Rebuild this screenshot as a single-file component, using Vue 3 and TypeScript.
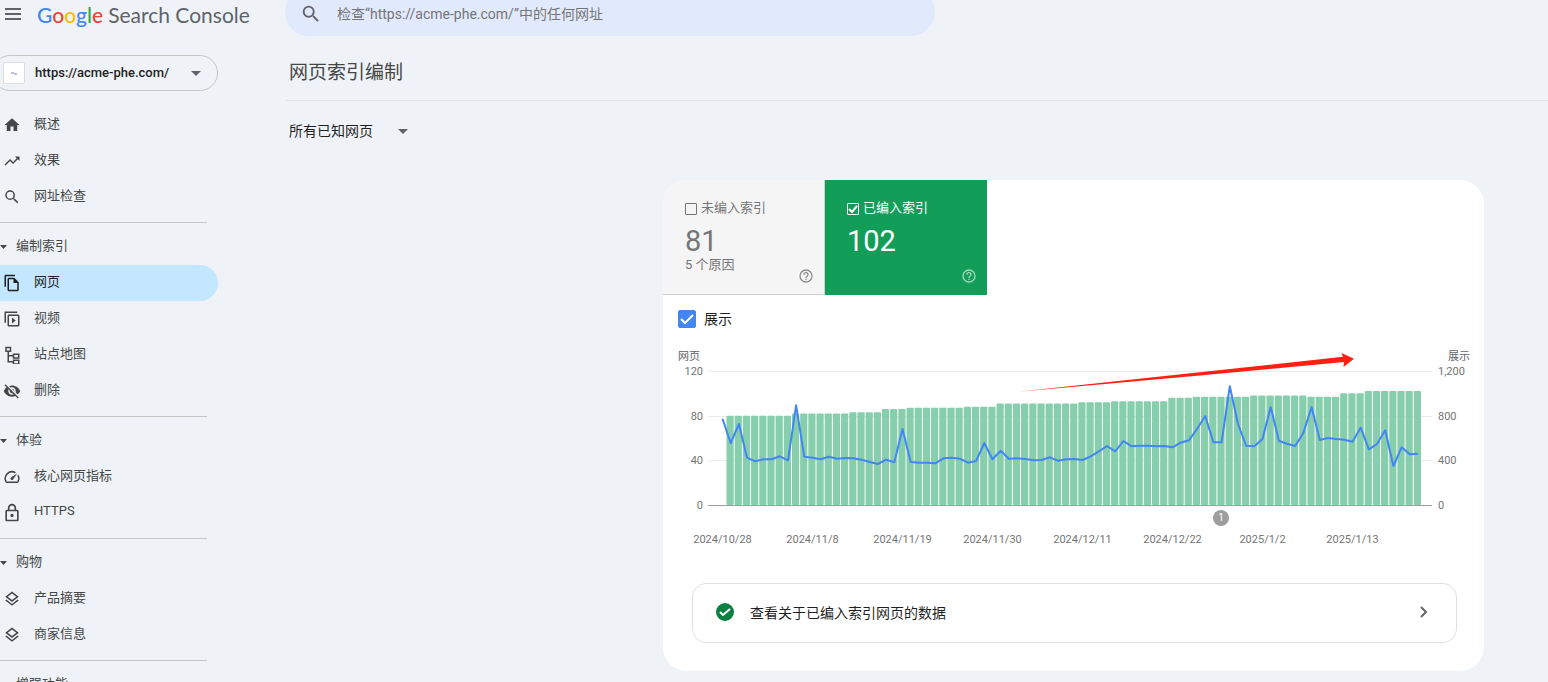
<script setup lang="ts">
import { ref } from 'vue'

interface NavItem {
  label: string
  icon: string
  size: number
  active?: boolean
}
interface NavSection {
  title: string
  items: NavItem[]
}

const icons: Record<string, string> = {
  home: 'M10 20v-6h4v6h5v-8h3L12 3 2 12h3v8z',
  trend: 'M16 6l2.29 2.29-4.88 4.88-4-4L2 16.59 3.41 18l6-6 4 4 6.3-6.29L22 12V6z',
  search:
    'M15.5 14h-.79l-.28-.27A6.47 6.47 0 0 0 16 9.5 6.5 6.5 0 1 0 9.5 16c1.61 0 3.09-.59 4.23-1.57l.27.28v.79l5 4.99L20.49 19zm-6 0a4.5 4.5 0 1 1 0-9 4.5 4.5 0 0 1 0 9z',
  pages:
    'M16 1H4c-1.1 0-2 .9-2 2v14h2V3h12zM15 5l6 6v10c0 1.1-.9 2-2 2H8c-1.1 0-2-.9-2-2V7c0-1.1.9-2 2-2zM8 7v14h11v-9h-5V7z',
  video:
    'M2 2h17v2H4v13H2zM8 6h12c1.1 0 2 .9 2 2v12c0 1.1-.9 2-2 2H8c-1.1 0-2-.9-2-2V8c0-1.1.9-2 2-2zM8 8v12h12V8zM12 10l5 4-5 4z',
  sitemap:
    'M3 1h8v7H8v4h5v-2h9v7h-9v-3H8v6h5v-2h9v7h-9v-3H6V8H3zM5 3v3h4V3zM15 12v3h5v-3zM15 20v3h5v-3z',
  hidden:
    'M12 7c2.76 0 5 2.24 5 5 0 .65-.13 1.26-.36 1.83l2.92 2.92c1.51-1.26 2.7-2.89 3.43-4.75-1.73-4.39-6-7.5-11-7.5-1.4 0-2.74.25-3.98.7l2.16 2.16C10.74 7.13 11.35 7 12 7zM2 4.27l2.28 2.28.46.46C3.08 8.3 1.78 10.02 1 12c1.73 4.39 6 7.5 11 7.5 1.55 0 3.03-.3 4.38-.84l.42.42L19.73 22 21 20.73 3.27 3zM7.53 9.8l1.55 1.55c-.05.21-.08.43-.08.65 0 1.66 1.34 3 3 3 .22 0 .44-.03.65-.08l1.55 1.55c-.67.33-1.41.53-2.2.53-2.76 0-5-2.24-5-5 0-.79.2-1.53.53-2.2zm4.31-.78l3.15 3.15.02-.16c0-1.66-1.34-3-3-3z',
  speed:
    'M20.38 8.57l-1.23 1.85a8 8 0 0 1-.22 7.58H5.07A8 8 0 0 1 15.58 6.85l1.85-1.23A10 10 0 0 0 3.35 19a2 2 0 0 0 1.72 1h13.85a2 2 0 0 0 1.74-1 10 10 0 0 0-.27-10.44zm-9.79 6.84a2 2 0 0 0 2.83 0l5.66-8.49-8.49 5.66a2 2 0 0 0 0 2.83z',
  lock:
    'M18 8h-1V6c0-2.76-2.24-5-5-5S7 3.24 7 6v2H6c-1.1 0-2 .9-2 2v10c0 1.1.9 2 2 2h12c1.1 0 2-.9 2-2V10c0-1.1-.9-2-2-2zM9 6c0-1.66 1.34-3 3-3s3 1.34 3 3v2H9zM6 10v10h12V10zM12 13a2 2 0 1 1 0 4 2 2 0 0 1 0-4z',
  layers:
    'M11.99 18.54l-7.37-5.73L3 14.07l9 7 9-7-1.63-1.27zM12 16l7.36-5.73L21 9l-9-7-9 7 1.63 1.27zm0-11.47L17.74 9 12 13.47 6.26 9z',
}

const topItems: NavItem[] = [
  { label: '概述', icon: 'home', size: 18 },
  { label: '效果', icon: 'trend', size: 18 },
  { label: '网址检查', icon: 'search', size: 18 },
]
const sections: NavSection[] = [
  {
    title: '编制索引',
    items: [
      { label: '网页', icon: 'pages', size: 18, active: true },
      { label: '视频', icon: 'video', size: 18 },
      { label: '站点地图', icon: 'sitemap', size: 18 },
      { label: '删除', icon: 'hidden', size: 18 },
    ],
  },
  {
    title: '体验',
    items: [
      { label: '核心网页指标', icon: 'speed', size: 18 },
      { label: 'HTTPS', icon: 'lock', size: 20 },
    ],
  },
  {
    title: '购物',
    items: [
      { label: '产品摘要', icon: 'layers', size: 18 },
      { label: '商家信息', icon: 'layers', size: 18 },
    ],
  },
  { title: '增强功能', items: [] },
]

const query = ref('')
const showNotIndexed = ref(false)
const showIndexed = ref(true)
const showImpressions = ref(true)

/* Indexed pages per day, as runs of [days, count]. */
const runs: [number, number][] = [
  [8, 80], [7, 82], [4, 83], [3, 86], [7, 87], [4, 88], [10, 91], [4, 92],
  [7, 93], [3, 96], [7, 97], [7, 98], [4, 97], [3, 100], [7, 102],
]
const pages: number[] = runs.flatMap(([days, count]) => Array<number>(days).fill(count))

const impressions: number[] = [
  777, 558, 729, 426, 393, 411, 411, 438, 402, 897, 435, 426, 411, 435, 417, 423, 420, 408, 387,
  369, 408, 384, 684, 387, 381, 381, 375, 420, 426, 417, 381, 396, 558, 411, 489, 417, 420, 414,
  402, 405, 429, 399, 411, 414, 405, 438, 483, 531, 483, 576, 528, 534, 534, 528, 531, 519, 561,
  582, 684, 801, 564, 564, 1068, 729, 534, 528, 594, 882, 579, 552, 531, 651, 882, 585, 603, 594,
  588, 570, 696, 501, 549, 672, 351, 519, 456, 462,
]

const baseY = 165
const plotHeight = 134
const firstX = 59.5
const step = 90 / 11

const bars = pages.map((count, i) => {
  const height = (count / 120) * plotHeight
  return { x: firstX + 4 + i * step, y: baseY - height, height }
})
const linePoints = impressions
  .map((value, i) => `${(firstX + i * step).toFixed(1)},${(baseY - (value / 1206) * plotHeight).toFixed(1)}`)
  .join(' ')

const ticks = [
  { y: 31, left: '120', right: '1,200' },
  { y: 76, left: '80', right: '800' },
  { y: 120, left: '40', right: '400' },
]
const dates = [
  '2024/10/28', '2024/11/8', '2024/11/19', '2024/11/30',
  '2024/12/11', '2024/12/22', '2025/1/2', '2025/1/13',
]
</script>

<template>
  <div class="page">
    <aside class="side">
      <div class="brand">
        <button class="plain menu" type="button" aria-label="主菜单">
          <svg width="24" height="24" viewBox="0 0 24 24"><path d="M4 7h16M4 12h16M4 17h16" /></svg>
        </button>
        <a class="logo" href="#">
          <span class="google"><span class="b">G</span><span class="r">o</span><span class="y">o</span><span class="b">g</span><span class="g">l</span><span class="r">e</span></span>
          <span class="product">Search Console</span>
        </a>
      </div>

      <button class="property" type="button">
        <span class="favicon">
          <svg width="8" height="6" viewBox="0 0 8 6"><path d="M1 3h3M4 4h3" /></svg>
        </span>
        <span class="property-name">https://acme-phe.com/</span>
        <svg class="caret" width="10" height="5" viewBox="0 0 10 5"><path d="M0 0h10L5 5z" /></svg>
      </button>

      <nav class="nav">
        <a v-for="item in topItems" :key="item.label" class="item" href="#">
          <span class="item-icon">
            <svg :width="item.size" :height="item.size" viewBox="0 0 24 24"><path :d="icons[item.icon]" /></svg>
          </span>
          <span>{{ item.label }}</span>
        </a>
        <section v-for="section in sections" :key="section.title" class="section">
          <button class="plain section-title" type="button">
            <svg width="7" height="4" viewBox="0 0 7 4"><path d="M0 0h7L3.500 4z" /></svg>
            <span>{{ section.title }}</span>
          </button>
          <a
            v-for="item in section.items"
            :key="item.label"
            class="item"
            :class="{ active: item.active }"
            href="#"
          >
            <span class="item-icon">
              <svg :width="item.size" :height="item.size" viewBox="0 0 24 24"><path :d="icons[item.icon]" /></svg>
            </span>
            <span>{{ item.label }}</span>
          </a>
        </section>
      </nav>
    </aside>

    <main class="main">
      <form class="search" role="search" @submit.prevent>
        <svg width="22" height="22" viewBox="0 0 24 24"><path :d="icons.search" /></svg>
        <input
          v-model="query"
          type="text"
          aria-label="检查网址"
          placeholder="检查“https://acme-phe.com/”中的任何网址"
        />
      </form>

      <h1 class="title">网页索引编制</h1>

      <button class="plain filter" type="button">
        <span>所有已知网页</span>
        <svg class="caret" width="10" height="5" viewBox="0 0 10 5"><path d="M0 0h10L5 5z" /></svg>
      </button>

      <div class="content">
        <section class="card">
          <div class="tiles">
            <div class="tile muted">
              <label class="tile-label">
                <span class="box">
                  <input v-model="showNotIndexed" type="checkbox" />
                  <svg v-if="showNotIndexed" viewBox="0 0 12 12"><path d="M2 6l3 3 5-6" /></svg>
                </span>
                <span>未编入索引</span>
              </label>
              <div class="count">81</div>
              <div class="reasons">5 个原因</div>
              <button class="plain help" type="button" aria-label="帮助">
                <svg width="16" height="16" viewBox="0 0 24 24">
                  <path d="M11 18h2v-2h-2zm1-16a10 10 0 1 0 0 20 10 10 0 0 0 0-20zm0 18a8 8 0 1 1 0-16 8 8 0 0 1 0 16zm0-14a4 4 0 0 0-4 4h2a2 2 0 1 1 4 0c0 2-3 1.750-3 5h2c0-2.250 3-2.500 3-5a4 4 0 0 0-4-4z" />
                </svg>
              </button>
            </div>
            <div class="tile indexed">
              <label class="tile-label">
                <span class="box">
                  <input v-model="showIndexed" type="checkbox" />
                  <svg v-if="showIndexed" viewBox="0 0 12 12"><path d="M2 6l3 3 5-6" /></svg>
                </span>
                <span>已编入索引</span>
              </label>
              <div class="count">102</div>
              <button class="plain help" type="button" aria-label="帮助">
                <svg width="16" height="16" viewBox="0 0 24 24">
                  <path d="M11 18h2v-2h-2zm1-16a10 10 0 1 0 0 20 10 10 0 0 0 0-20zm0 18a8 8 0 1 1 0-16 8 8 0 0 1 0 16zm0-14a4 4 0 0 0-4 4h2a2 2 0 1 1 4 0c0 2-3 1.750-3 5h2c0-2.250 3-2.500 3-5a4 4 0 0 0-4-4z" />
                </svg>
              </button>
            </div>
          </div>

          <label class="impressions">
            <span class="blue-box">
              <input v-model="showImpressions" type="checkbox" />
              <svg v-if="showImpressions" viewBox="0 0 18 18"><path d="M3 9l4 4 8-8" /></svg>
            </span>
            <span class="impressions-text">展示</span>
          </label>

          <svg class="chart" viewBox="0 0 821 210" role="img" aria-label="已编入索引的网页和展示次数">
            <text x="15" y="20" class="axis-name">网页</text>
            <text x="807" y="20" class="axis-name end">展示</text>
            <g v-for="tick in ticks" :key="tick.left">
              <path class="grid" :d="`M45 ${tick.y + 0.5}H769`" />
              <text x="40" :y="tick.y + 4" class="end">{{ tick.left }}</text>
              <text x="775" :y="tick.y + 4">{{ tick.right }}</text>
            </g>
            <text x="40" y="169" class="end">0</text>
            <text x="775" y="169">0</text>
            <g v-if="showIndexed" class="bars">
              <rect v-for="(bar, i) in bars" :key="i" :x="bar.x" :y="bar.y" width="7.2" :height="bar.height" rx="1" />
            </g>
            <path class="base" d="M45 165.500H769" />
            <polyline v-if="showImpressions" class="line" :points="linePoints" />
            <path class="arrow" d="M355 51.800L680 16.800L678.500 13L691 18.800L680.500 27L681 22L537 35.500Z" />
            <circle class="marker" cx="558" cy="178" r="8" />
            <text x="558" y="181" class="marker-text">1</text>
            <text v-for="(date, i) in dates" :key="date" :x="firstX + i * 90" y="203" class="mid">{{ date }}</text>
          </svg>

          <a class="details" href="#">
            <svg width="20" height="20" viewBox="0 0 20 20">
              <circle cx="10" cy="10" r="9" /><path d="M5 10l3 3 7-6" />
            </svg>
            <span class="details-text">查看关于已编入索引网页的数据</span>
            <svg class="chevron" width="8" height="12" viewBox="0 0 8 12"><path d="M1 1l5 5-5 5" /></svg>
          </a>
        </section>
      </div>
    </main>
  </div>
</template>

<style>
body {
  background: #eff3f8;
}
</style>

<style scoped>
.page {
  display: flex;
  gap: 68px;
  height: 100vh;
  overflow: hidden;
  background: #eff3f8;
  color: #444746;
  font-family: Roboto, 'Noto Sans CJK SC', sans-serif;
  font-size: 13px;
}
.page *,
.page {
  box-sizing: border-box;
}
.plain {
  border: 0;
  padding: 0;
  background: none;
  color: inherit;
  font: inherit;
  text-align: left;
  cursor: pointer;
}
a {
  color: inherit;
  text-decoration: none;
}
svg {
  display: block;
  flex: none;
}

/* Sidebar */
.side {
  flex: none;
  width: 218px;
}
.brand {
  display: flex;
  align-items: center;
  gap: 12px;
  height: 28px;
  padding-left: 1px;
}
.menu path {
  fill: none;
  stroke: #5f6368;
  stroke-width: 2;
}
.logo {
  display: flex;
  align-items: baseline;
  gap: 5px;
  margin-right: -40px;
  padding-top: 2px;
  font-family: Lato, sans-serif;
  font-size: 21px;
  line-height: 28px;
  white-space: nowrap;
}
.google {
  font-weight: 500;
}
.product {
  color: #5f6368;
}
.b { color: #4285f4; }
.r { color: #ea4335; }
.y { color: #fbbc04; }
.g { color: #34a853; }
.property {
  display: flex;
  align-items: center;
  width: 226px;
  height: 36px;
  margin: 27px 0 16px -8px;
  padding: 0 16px 0 10px;
  border: 1px solid #c4c7c5;
  border-radius: 18px;
  background: transparent;
  color: #1f1f1f;
  font: 500 13px/20px Roboto, sans-serif;
  text-align: left;
}
.favicon {
  display: grid;
  place-items: center;
  width: 22px;
  height: 22px;
  margin-right: 10px;
  border: 1px solid #dadce0;
  border-radius: 2px;
  background: #fff;
}
.favicon path {
  fill: none;
  stroke: #b9bfdc;
  stroke-width: 2;
}
.property-name {
  flex: 1;
}
.caret {
  fill: #5f6368;
}
.item {
  display: flex;
  align-items: center;
  height: 36px;
  border-radius: 0 18px 18px 0;
}
.item > span:last-child {
  padding-bottom: 5px;
}
.item-icon {
  display: grid;
  place-items: center;
  width: 24px;
  margin-right: 10px;
}
.item-icon svg {
  fill: #444746;
  fill-rule: evenodd;
}
.active {
  background: #c2e7ff;
  color: #1f1f1f;
}
.active svg {
  fill: #1f1f1f;
}
.section {
  padding-top: 7px;
}
.section-title {
  display: flex;
  align-items: center;
  gap: 9px;
  width: 207px;
  height: 43px;
  padding-top: 5px;
  border-top: 1px solid #c4c7c5;
}
.section-title span {
  padding-bottom: 4px;
}
.section-title svg {
  fill: #444746;
}

/* Main column */
.main {
  display: flex;
  flex: 1;
  flex-direction: column;
  min-width: 0;
}
.search {
  display: flex;
  flex: none;
  align-items: center;
  gap: 15px;
  width: 650px;
  max-width: 100%;
  height: 48px;
  margin: -12px 0 0 -1px;
  padding: 4px 24px 0 15px;
  border-radius: 24px;
  background: #e1eafc;
}
.search svg {
  fill: #5f6368;
}
.search input {
  flex: 1;
  min-width: 0;
  border: 0;
  outline: 0;
  padding: 0;
  background: none;
  color: #1f1f1f;
  font: 14px/20px Roboto, 'Noto Sans CJK SC', sans-serif;
}
.search input::placeholder {
  color: #757575;
  opacity: 1;
}
.title {
  flex: none;
  height: 65px;
  margin: 0;
  padding: 23px 0 0 3px;
  border-bottom: 1px solid #e0e3e3;
  font-size: 19px;
  font-weight: 400;
  line-height: 28px;
}
.filter {
  display: flex;
  align-items: center;
  gap: 25px;
  align-self: flex-start;
  margin: 20px 0 39px 3px;
  color: #1f1f1f;
  font-size: 14px;
  line-height: 20px;
}
.content {
  display: grid;
  grid-template-columns: minmax(0, 377fr) minmax(0, 821fr) 64px;
}
.card {
  grid-column: 2;
  overflow: hidden;
  padding-bottom: 28px;
  border-radius: 24px;
  background: #fff;
}
.tiles {
  display: grid;
  grid-template-columns: 162px 162px;
}
.tile {
  position: relative;
  height: 115px;
  padding: 18px 0 0 22px;
}
.muted {
  border-right: 1px solid #d0d0d0;
  border-bottom: 1px solid #d0d0d0;
  background: #f5f5f5;
  color: #757575;
}
.indexed {
  background: #129d58;
  color: #fff;
}
.tile-label {
  display: flex;
  align-items: center;
  gap: 4px;
  line-height: 20px;
}
.box,
.blue-box {
  display: grid;
  place-items: center;
}
.box {
  padding-top: 2px;
}
.box > *,
.blue-box > * {
  grid-area: 1 / 1;
}
.box input,
.blue-box input {
  appearance: none;
  margin: 0;
  color: inherit;
}
.box input {
  width: 12px;
  height: 12px;
  border: 1px solid currentColor;
  border-radius: 1px;
}
.box svg {
  width: 12px;
  height: 12px;
  fill: none;
  stroke: currentColor;
  stroke-width: 2;
  pointer-events: none;
}
.count {
  padding-top: 7px;
  font-size: 29px;
  line-height: 32px;
}
.reasons {
  line-height: 16px;
}
.help {
  position: absolute;
  right: 10px;
  bottom: 11px;
  opacity: 0.8;
}
.muted .help {
  bottom: 10px;
}
.help svg {
  fill: currentColor;
}
.indexed .help {
  opacity: 0.6;
}
.impressions {
  display: flex;
  align-items: center;
  gap: 8px;
  width: max-content;
  height: 45px;
  padding: 3px 0 0 15px;
  color: #1f1f1f;
  font-size: 14px;
}
.impressions-text {
  padding-bottom: 2px;
}
.blue-box input {
  width: 18px;
  height: 18px;
  border: 1px solid #4285f4;
  border-radius: 2px;
}
.blue-box input:checked {
  background: #4285f4;
}
.blue-box svg {
  width: 18px;
  height: 18px;
  fill: none;
  stroke: #fff;
  stroke-width: 2;
  pointer-events: none;
}

/* Chart */
.chart {
  width: 100%;
  height: auto;
  fill: #757575;
  font-size: 11px;
}
.axis-name {
  fill: #5f6368;
}
.end {
  text-anchor: end;
}
.mid {
  text-anchor: middle;
}
.grid {
  stroke: #ebebeb;
}
.base {
  stroke: #9e9e9e;
}
.bars rect {
  fill: #87cfac;
}
.line {
  fill: none;
  stroke: #4285f4;
  stroke-width: 2;
  stroke-linejoin: round;
}
.arrow {
  fill: #ff2011;
}
.marker {
  fill: #9e9e9e;
}
.marker-text {
  fill: #fff;
  font-size: 10px;
  text-anchor: middle;
}

.details {
  display: flex;
  align-items: center;
  gap: 15px;
  height: 60px;
  margin: 33px 27px 0 29px;
  padding: 0 28px 2px 22px;
  border: 1px solid #e0e0e0;
  border-radius: 14px;
  color: #1f1f1f;
  font-size: 14px;
}
.details circle {
  fill: #0b8043;
}
.details path {
  fill: none;
  stroke: #fff;
  stroke-width: 2;
}
.details .chevron path {
  stroke: #5f6368;
}
.details-text {
  flex: 1;
}
</style>
